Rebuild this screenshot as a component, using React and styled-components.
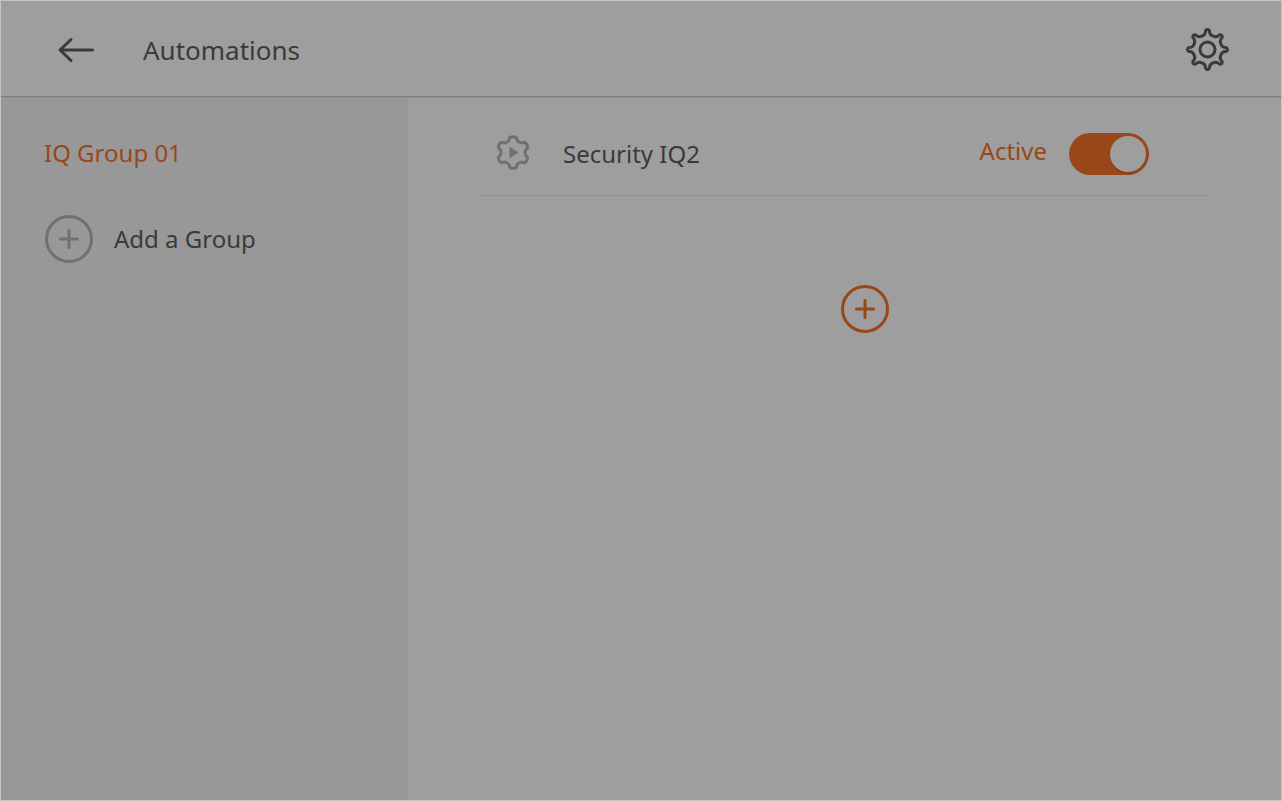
import React, { useState } from "react";
import styled, { createGlobalStyle } from "styled-components";

const color = {
  surface: "#9e9e9e",
  side: "#989898",
  ink: "#3a3a3a",
  muted: "#707070",
  accent: "#984818",
  rule: "#7c7c7c",
  ruleSoft: "#929292",
  hairline: "#929292",
  frame: "#c4c4c4",
};

const GlobalStyle = createGlobalStyle`
  *, *::before, *::after { box-sizing: border-box; }
  body {
    margin: 0;
    background: ${color.surface};
    font-family: "Noto Sans", "Open Sans", sans-serif;
    color: ${color.ink};
  }
`;

const Screen = styled.div`
  display: flex;
  flex-direction: column;
  min-height: 100vh;
  border: 1px solid ${color.frame};
  background: ${color.surface};
`;

const Header = styled.header`
  position: relative;
  display: flex;
  align-items: center;
  height: 96px;
  padding: 2px 51px 0 56px;
  border-bottom: 1px solid ${color.rule};
  box-shadow: 0 1px 0 ${color.ruleSoft};
`;

const IconButton = styled.button`
  display: flex;
  padding: 0;
  border: 0;
  background: none;
  color: ${(p) => p.$color || color.ink};
  cursor: pointer;
`;

const Title = styled.h1`
  flex: 1;
  margin: 0 0 0 46px;
  font-size: 26px;
  line-height: 36px;
  font-weight: 400;
`;

const Body = styled.div`
  display: flex;
  flex: 1;
`;

const Sidebar = styled.nav`
  flex: 0 0 407px;
  padding: 16px 30px 0 31px;
  background: ${color.side};
`;

const SideItem = styled.button`
  display: flex;
  align-items: center;
  gap: 20px;
  width: 100%;
  height: ${(p) => p.$height}px;
  padding: 0 12px 4px;
  border: 0;
  border-bottom: 1px solid ${color.hairline};
  background: none;
  color: ${(p) => (p.$active ? color.accent : color.ink)};
  font: inherit;
  font-size: 24px;
  line-height: 32px;
  text-align: left;
  cursor: pointer;
`;

const Main = styled.main`
  display: flex;
  flex: 1;
  flex-direction: column;
  gap: 88px;
  padding: 15px 73px 0 72px;
`;

const Automation = styled.div`
  display: flex;
  align-items: center;
  width: 100%;
  height: 84px;
  padding: 0 59px 0 15px;
  border-bottom: 1px solid ${color.hairline};
`;

const Name = styled.span`
  flex: 1;
  margin-left: 32px;
  font-size: 24px;
  line-height: 32px;
`;

const ToggleLabel = styled.label`
  display: flex;
  align-items: center;
  gap: 22px;
  color: ${color.accent};
  font-size: 24px;
  line-height: 32px;
  cursor: pointer;
`;

const ToggleText = styled.span`
  padding-bottom: 6px;
`;

const Toggle = styled.input`
  appearance: none;
  display: flex;
  align-items: center;
  justify-content: flex-start;
  width: 80px;
  height: 42px;
  margin: 0;
  padding: 0 3px;
  border-radius: 21px;
  background: ${color.muted};
  cursor: pointer;

  &::before {
    content: "";
    width: 36px;
    height: 36px;
    border-radius: 50%;
    background: ${color.surface};
    box-shadow: 0 1px 2px rgba(0, 0, 0, 0.2);
  }

  &:checked {
    justify-content: flex-end;
    background: ${color.accent};
  }
`;

const AddRow = styled.div`
  display: flex;
  justify-content: center;
  padding-left: 42px;
`;

const Icon = styled.svg`
  display: block;
  flex: none;
  fill: none;
  stroke: currentColor;
  stroke-width: 3;
  stroke-linecap: round;
  stroke-linejoin: round;
`;

// Each tooth is a rounded cap; a curved valley joins it to the next one.
function gearPath({ teeth, shoulder, crown, root, tipHalf, rootHalf }) {
  const at = (r, degrees) => {
    const a = ((degrees - 90) * Math.PI) / 180;
    return `${(r * Math.cos(a)).toFixed(2)} ${(r * Math.sin(a)).toFixed(2)}`;
  };
  const step = 360 / teeth;
  let d = `M${at(shoulder, -tipHalf)}`;
  for (let i = 0; i < teeth; i += 1) {
    const c = i * step;
    d += ` C${at(crown, c - tipHalf)} ${at(crown, c + tipHalf)} ${at(shoulder, c + tipHalf)}`;
    d += ` C${at(root, c + rootHalf)} ${at(root, c + step - rootHalf)} ${at(shoulder, c + step - tipHalf)}`;
  }
  return `${d}Z`;
}

const settingsGear = gearPath({
  teeth: 8,
  shoulder: 17.8,
  crown: 20.8,
  root: 13.9,
  tipHalf: 6.5,
  rootHalf: 9,
});
const routineGear = gearPath({
  teeth: 6,
  shoulder: 14.4,
  crown: 17,
  root: 11.8,
  tipHalf: 14,
  rootHalf: 17,
});

const BackIcon = () => (
  <Icon width="40" height="28" viewBox="0 0 40 28" aria-hidden="true">
    <path d="M35.5 14H4M14 3.5 3 14 14 24.5" />
  </Icon>
);

const SettingsIcon = () => (
  <Icon width="44" height="44" viewBox="-21.5 -21.5 44 44" aria-hidden="true">
    <path d={settingsGear} />
    <circle r="7.5" />
  </Icon>
);

const Muted = styled.span`
  display: flex;
  padding-bottom: ${(p) => p.$lift || 0}px;
  color: ${color.muted};
`;

const RoutineIcon = () => (
  <Icon width="36" height="36" viewBox="-18 -18.5 36 36" aria-hidden="true">
    <path d={routineGear} />
    <path d="M-3.5-6 5.5 0-3.5 6Z" fill="currentColor" stroke="none" />
  </Icon>
);

const PlusIcon = () => (
  <Icon width="50" height="50" viewBox="-25 -25 50 50" aria-hidden="true">
    <circle r="22.5" />
    <path d="M-8.5 0H8.5M0-8.5V8.5" />
  </Icon>
);

export default function App() {
  const [active, setActive] = useState(true);
  return (
    <>
      <GlobalStyle />
      <Screen>
        <Header>
          <IconButton type="button" aria-label="Back">
            <BackIcon />
          </IconButton>
          <Title>Automations</Title>
          <IconButton type="button" aria-label="Settings">
            <SettingsIcon />
          </IconButton>
        </Header>
        <Body>
          <Sidebar aria-label="Groups">
            <SideItem type="button" $height={84} $active>
              IQ Group 01
            </SideItem>
            <SideItem type="button" $height={88}>
              <Muted>
                <PlusIcon />
              </Muted>
              Add a Group
            </SideItem>
          </Sidebar>
          <Main>
            <Automation>
              <Muted $lift={4}>
                <RoutineIcon />
              </Muted>
              <Name>Security IQ2</Name>
              <ToggleLabel>
                <ToggleText>Active</ToggleText>
                <Toggle
                  type="checkbox"
                  checked={active}
                  onChange={(e) => setActive(e.target.checked)}
                />
              </ToggleLabel>
            </Automation>
            <AddRow>
              <IconButton type="button" $color={color.accent} aria-label="Add an automation">
                <PlusIcon />
              </IconButton>
            </AddRow>
          </Main>
        </Body>
      </Screen>
    </>
  );
}
